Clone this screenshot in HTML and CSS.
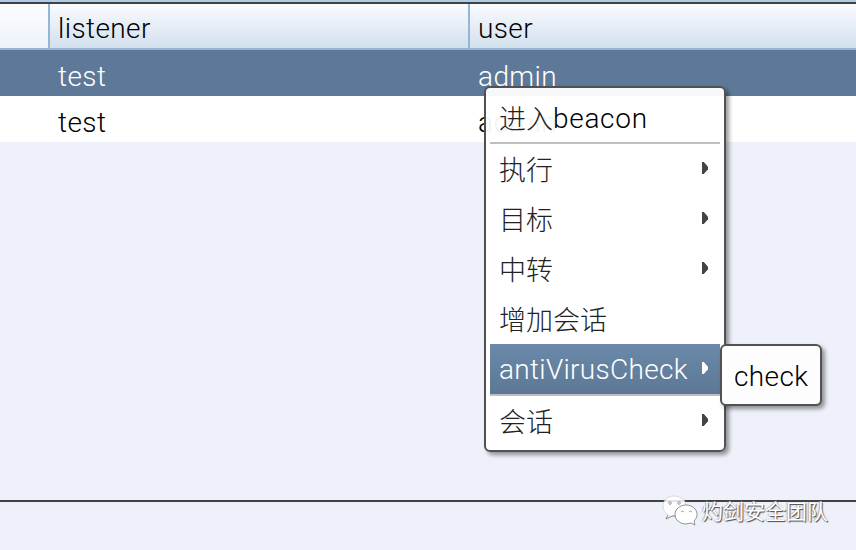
FILE: index.html
```html
<!DOCTYPE html>
<html lang="zh-CN">
<head>
<meta charset="utf-8">
<title>Sessions</title>
<link rel="stylesheet" href="styles.css">
</head>
<body>
<main class="panel">
  <div class="row header"><span class="cell"></span><span class="cell">listener</span><span class="cell">user</span></div>
  <div class="row selected"><span class="cell"></span><span class="cell">test</span><span class="cell">admin</span></div>
  <div class="row"><span class="cell"></span><span class="cell">test</span><span class="cell">admin</span></div>
</main>
<footer class="footer">
  <div class="brand">
    <svg class="logo" width="36" height="32" viewBox="0 0 36 32">
      <path d="M12 1C5 1 1 6 1 11c0 4 2 7 5 9l-2 4 6-3c8 1 14-3 14-10C24 5 19 1 12 1Z" fill="#fff" fill-opacity=".85" stroke="#ccc" stroke-width=".7"/>
      <path d="M6 20l-2 4 6-3 4 0" fill="none" stroke="#777" stroke-width=".8"/>
      <path d="M24 10c-6 0-11 4-11 9.500S18 29 24 29l5-1 4 2-1-4c2-2 3-4 3-6.500C35 14 30 10 24 10Z" fill="#fff" stroke="#777" stroke-width=".8"/>
      <g fill="#fff" stroke="#888" stroke-width=".8"><circle cx="8" cy="8" r="1.300"/><circle cx="17" cy="8" r="1.300"/><path d="M19 17q1-2 3 0M27 17q1-2 3 0" fill="none"/></g>
    </svg>
    <span class="brand-name">灼剑安全团队</span>
  </div>
</footer>
<nav class="menu">
  <div class="item first"><span class="cjk">进入</span><span class="latin">beacon</span></div>
  <div class="item"><span class="cjk">执行</span><i class="arrow"></i></div>
  <div class="item"><span class="cjk">目标</span><i class="arrow"></i></div>
  <div class="item"><span class="cjk">中转</span><i class="arrow"></i></div>
  <div class="item"><span class="cjk">增加会话</span></div>
  <div class="item active"><span class="latin">antiVirusCheck</span><i class="arrow"></i></div>
  <div class="item"><span class="cjk">会话</span><i class="arrow"></i></div>
</nav>
<div class="submenu">check</div>
</body>
</html>
```
FILE: styles.css
```css
* { box-sizing: border-box; }
body {
  margin: 0;
  width: 856px;
  height: 550px;
  overflow: hidden;
  position: relative;
  display: flex;
  flex-direction: column;
  background: #eef1fa;
  color: #000;
  font-family: Roboto, "Noto Sans CJK SC", sans-serif;
  font-size: 28px;
  font-weight: 300;
  letter-spacing: .4px;
}
.panel {
  flex: none;
  height: 502px;
  border-top: 2px solid #b0cbe6;
  border-bottom: 2px solid #414244;
}
.row {
  display: grid;
  grid-template-columns: 50px 420px 1fr;
  grid-template-rows: 100%;
  height: 46px;
  line-height: 53px;
  background: #fff;
}
.cell { padding-left: 8px; }
.header {
  height: 48px;
  line-height: 49px;
  border-top: 2px solid #414244;
  border-bottom: 2px solid #95b5d3;
  background: linear-gradient(#fafbff, #d2e0ed);
}
.header .cell:not(:last-child) { border-right: 2px solid #95b5d3; }
.header .cell:first-child { background: linear-gradient(#fcfdff, #edf2fa); }
.selected { background: #5e7997; color: #fff; }
.footer { flex: 1; display: flex; justify-content: flex-end; padding-right: 28px; }
.brand { display: flex; margin-top: -8px; gap: 4px; }
.logo { margin-top: 1px; }
.brand-name {
  font: 400 21px/33px "Noto Sans CJK SC", sans-serif;
  letter-spacing: 0;
  color: #fff;
  text-shadow: 1px 1px 1px #444, -1px 0 1px #aaa;
}
.menu {
  position: absolute;
  left: 484px;
  top: 86px;
  width: 242px;
  height: 366px;
  padding: 4px 4px 0;
  border: 2px solid #505153;
  border-radius: 6px;
  background: rgba(255, 255, 255, .95);
  box-shadow: 3px 3px 4px rgba(0, 0, 0, .4);
}
.item {
  display: flex;
  align-items: center;
  justify-content: space-between;
  height: 50px;
  padding: 0 12px 2px 9px;
}
.cjk {
  font-family: "Noto Sans CJK SC", sans-serif;
  font-size: 27px;
  letter-spacing: 0;
  color: #222;
}
.first { height: 52px; padding-bottom: 0; justify-content: flex-start; border-bottom: 2px solid #bfbfbf; }
.latin { padding-top: 2px; }
.first .latin { letter-spacing: .7px; }
.active {
  height: 52px;
  background: linear-gradient(#6b89a9, #5c7895);
  border-bottom: 2px solid #bfbfbf;
  color: #fff;
}
.active .latin { letter-spacing: .3px; }
.arrow {
  width: 6px;
  height: 12px;
  background: #444;
  clip-path: polygon(0 0, 30% 0, 100% 40%, 100% 60%, 30% 100%, 0 100%);
}
.active .arrow { background: #fff; }
.submenu {
  position: absolute;
  left: 720px;
  top: 344px;
  width: 102px;
  height: 62px;
  padding-left: 12px;
  line-height: 61px;
  border: 2px solid #505153;
  border-radius: 6px;
  background: #fdfdfe;
  box-shadow: 3px 3px 4px rgba(0, 0, 0, .4);
}
```
